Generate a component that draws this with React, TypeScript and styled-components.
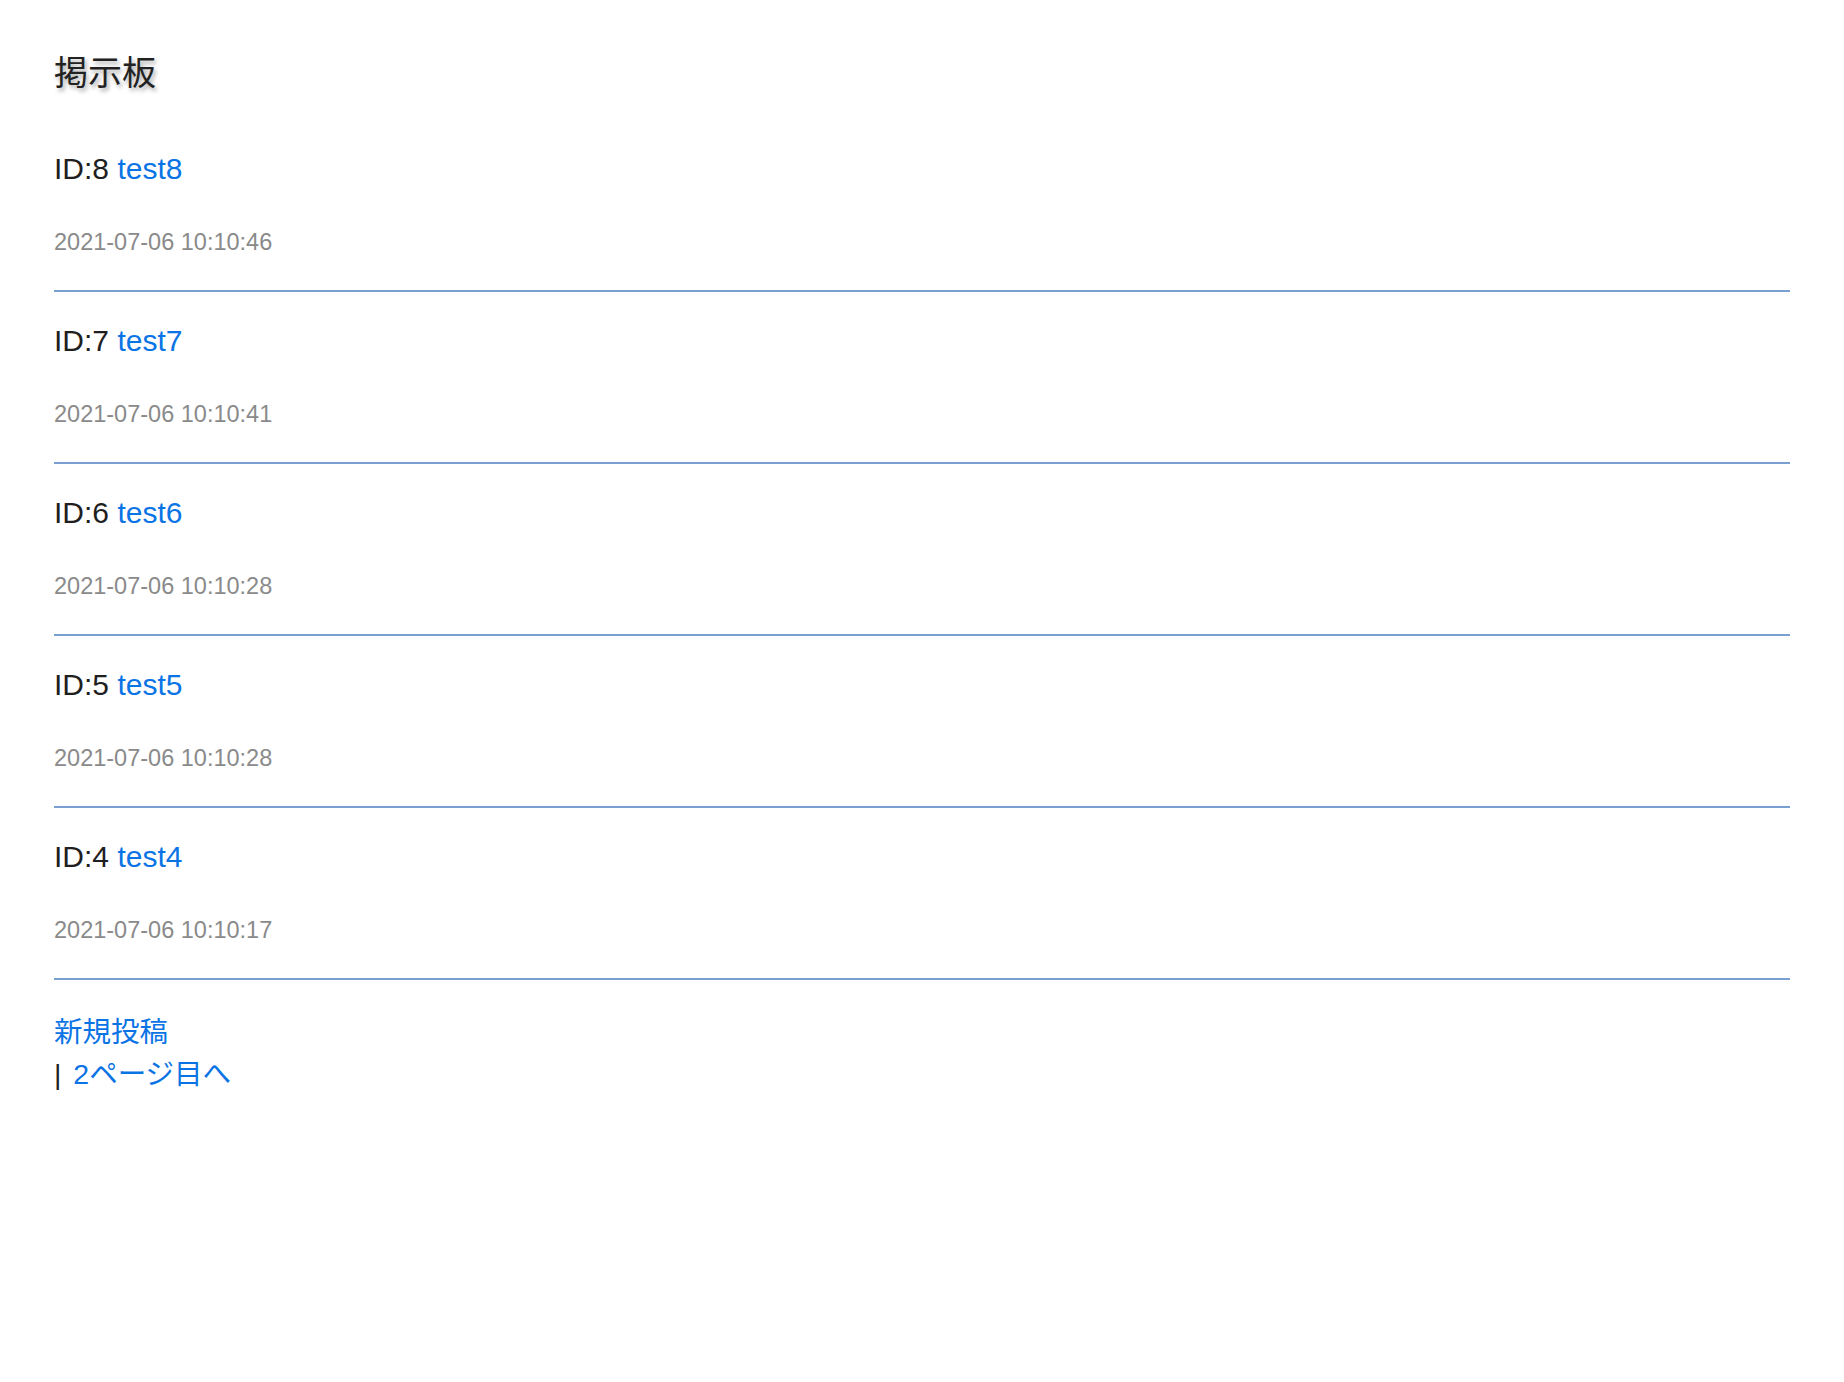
import React from "react";
import styled, { createGlobalStyle } from "styled-components";

const GlobalStyle = createGlobalStyle`
  html, body {
    margin: 0;
    padding: 0;
    background: #ffffff;
  }
  body {
    font-family: "Liberation Sans", "Noto Sans CJK JP", sans-serif;
    color: #1f1f1f;
  }
`;

const Page = styled.div`
  padding: 53px 54px 80px;
`;

const Title = styled.h1`
  margin: 0 0 27px;
  font-size: 34px;
  line-height: 40px;
  font-weight: 400;
  color: #222;
  text-shadow: 2px 3px 4px rgba(0, 0, 0, 0.35);
`;

const PostList = styled.ul`
  list-style: none;
  margin: 0;
  padding: 0;
`;

const PostItem = styled.li`
  display: flex;
  flex-direction: column;
  gap: 40px;
  padding: 31px 0 33px;
  border-bottom: 2px solid #7a9fd1;
`;

const PostHead = styled.div`
  font-size: 30px;
  line-height: 36px;
  color: #1f1f1f;
`;

const Link = styled.a<{ $gap?: number }>`
  color: #0b74e5;
  text-decoration: none;
  margin-left: ${(p) => p.$gap ?? 0}px;
`;

const PostDate = styled.div`
  font-size: 23.5px;
  line-height: 30px;
  color: #8a8a8a;
`;

const Footer = styled.div`
  padding-top: 31px;
  font-size: 28.5px;
  line-height: 42px;
  color: #1f1f1f;
`;

const FooterRow = styled.div``;

type Post = { id: number; title: string; createdAt: string };

const posts: Post[] = [
  { id: 8, title: "test8", createdAt: "2021-07-06 10:10:46" },
  { id: 7, title: "test7", createdAt: "2021-07-06 10:10:41" },
  { id: 6, title: "test6", createdAt: "2021-07-06 10:10:28" },
  { id: 5, title: "test5", createdAt: "2021-07-06 10:10:28" },
  { id: 4, title: "test4", createdAt: "2021-07-06 10:10:17" },
];

const App = () => {
  return (
    <>
      <GlobalStyle />
      <Page>
        <Title>掲示板</Title>
        <PostList>
          {posts.map((post) => (
            <PostItem key={post.id}>
              <PostHead>
                ID:{post.id} <Link href="#">{post.title}</Link>
              </PostHead>
              <PostDate>{post.createdAt}</PostDate>
            </PostItem>
          ))}
        </PostList>
        <Footer>
          <FooterRow>
            <Link href="#">新規投稿</Link>
          </FooterRow>
          <FooterRow>
            | <Link href="#" $gap={4}>2ページ目へ</Link>
          </FooterRow>
        </Footer>
      </Page>
    </>
  );
};

export default App;
